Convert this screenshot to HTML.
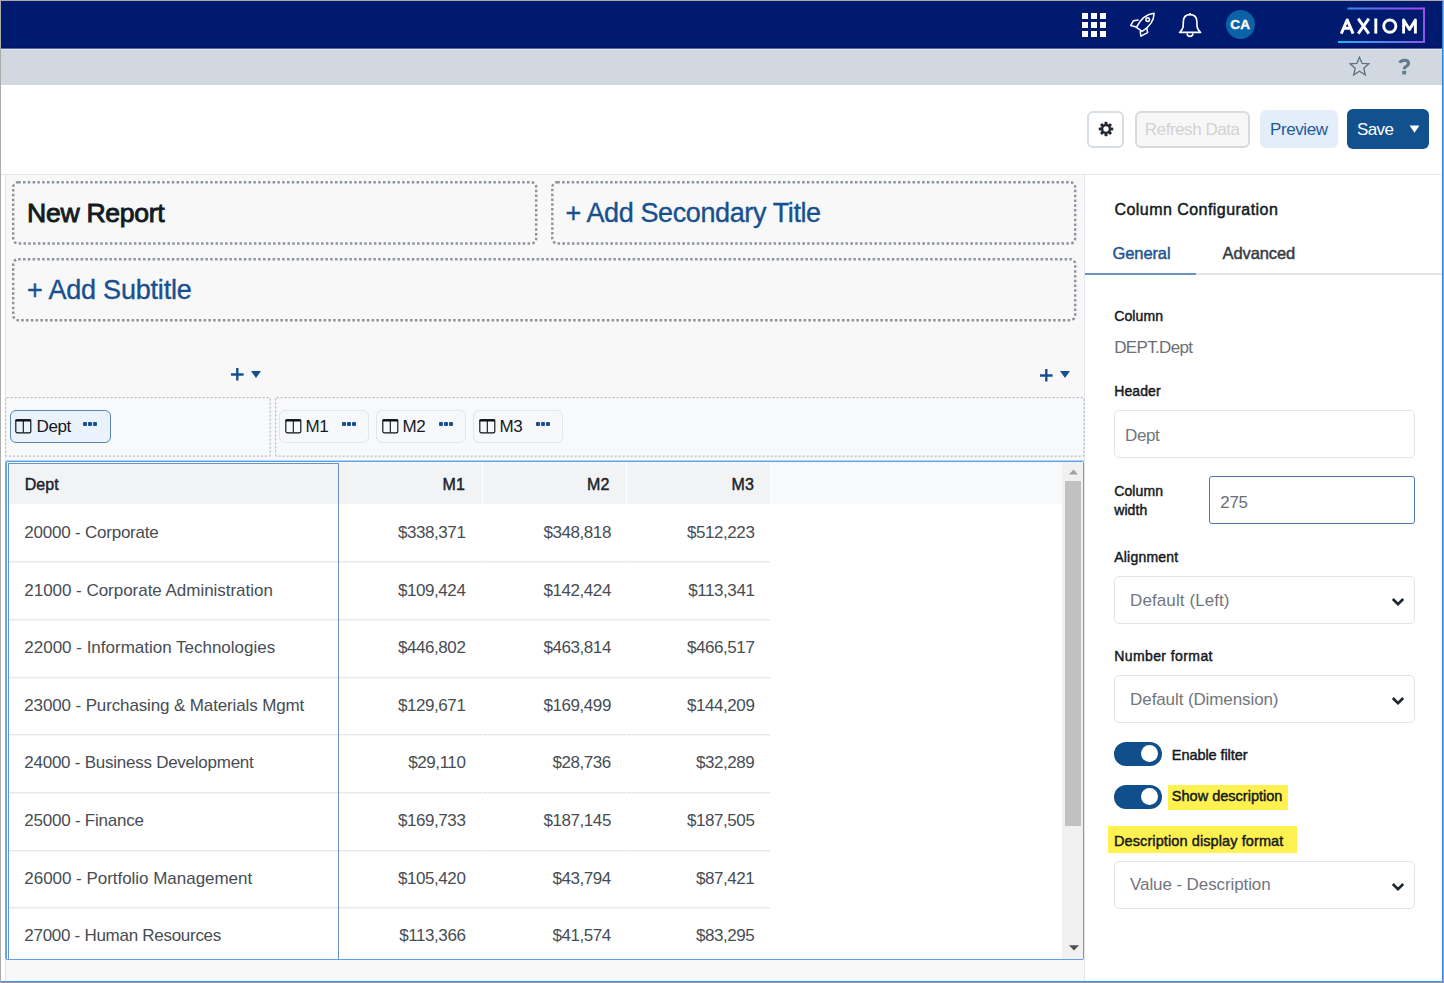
<!DOCTYPE html>
<html><head><meta charset="utf-8"><title>Axiom Report</title>
<style>
html,body{margin:0;padding:0;width:1444px;height:983px;overflow:hidden;background:#fff;}
body{position:relative;font-family:"Liberation Sans",sans-serif;}
.a{position:absolute;}
.t{position:absolute;white-space:nowrap;font-family:"Liberation Sans",sans-serif;}
</style></head><body>
<div class="a" style="left:0px;top:0px;width:1444px;height:983px;background:#fff;"></div>
<div class="a" style="left:1px;top:1px;width:1441px;height:47px;background:#001a70;"></div>
<div class="a" style="left:1px;top:46px;width:1441px;height:2px;background:#00136a;"></div>
<div class="a" style="left:1px;top:48px;width:1441px;height:1px;background:#5a6a9a;"></div>
<div class="a" style="left:1px;top:49px;width:1441px;height:1px;background:#e0e6e9;"></div>
<div class="a" style="left:1px;top:50px;width:1441px;height:35px;background:#d1d8df;"></div>
<div class="a" style="left:1px;top:174px;width:1441px;height:1px;background:#e4e8ec;"></div>
<div class="a" style="left:5px;top:175px;width:1079px;height:806px;background:#f8f8f8;border-left:1px solid #e3e7ec;box-sizing:border-box;"></div>
<div class="a" style="left:1084px;top:175px;width:358px;height:806px;background:#fff;border-left:1px solid #e3e7ec;box-sizing:border-box;"></div>
<div class="a" style="left:0px;top:0px;width:1444px;height:1px;background:#ababab;"></div>
<div class="a" style="left:0px;top:0px;width:1px;height:983px;background:#ababab;"></div>
<div class="a" style="left:1442px;top:1px;width:1px;height:981px;background:#3a80d0;"></div>
<div class="a" style="left:1443px;top:0px;width:1px;height:983px;background:#9aa6b0;"></div>
<div class="a" style="left:1px;top:981px;width:1442px;height:1px;background:#4a90e0;"></div>
<div class="a" style="left:0px;top:982px;width:1444px;height:1px;background:#8a9aa8;"></div>
<div class="a" style="left:1082px;top:13px;width:6px;height:6px;background:#fff;"></div>
<div class="a" style="left:1082px;top:22px;width:6px;height:6px;background:#fff;"></div>
<div class="a" style="left:1082px;top:31px;width:6px;height:6px;background:#fff;"></div>
<div class="a" style="left:1091px;top:13px;width:6px;height:6px;background:#fff;"></div>
<div class="a" style="left:1091px;top:22px;width:6px;height:6px;background:#fff;"></div>
<div class="a" style="left:1091px;top:31px;width:6px;height:6px;background:#fff;"></div>
<div class="a" style="left:1100px;top:13px;width:6px;height:6px;background:#fff;"></div>
<div class="a" style="left:1100px;top:22px;width:6px;height:6px;background:#fff;"></div>
<div class="a" style="left:1100px;top:31px;width:6px;height:6px;background:#fff;"></div>
<svg class="a" style="left:1128px;top:10px" width="30" height="30" viewBox="0 0 30 30">
<g fill="none" stroke="#fff" stroke-width="1.5" stroke-linejoin="round">
<path d="M26.1 3.3 C20 3.8 13 8.5 8.4 17.3 L14.2 21.4 C22 16.5 26 10 26.1 3.3 Z"/>
<path d="M10.6 10 L5.3 10.8 L2.7 15.6 L8.2 16.9"/>
<path d="M18.7 17.6 L19.6 22.6 L12.9 26.2 L12.2 21.2"/>
<circle cx="19.7" cy="9.6" r="1.8"/>
</g></svg>
<svg class="a" style="left:1177px;top:11px" width="26" height="28" viewBox="0 0 26 28">
<g fill="none" stroke="#fff" stroke-width="1.6" stroke-linejoin="round">
<path d="M13 3.6 C8.8 3.6 6.6 6 6.4 10 L6.1 16 C5.7 18.2 3.8 20 2.6 21.4 L23.6 21.4 C22.4 20 20.5 18.2 20.1 16 L19.8 10 C19.6 6 17.4 3.6 13 3.6 Z"/>
<path d="M10 22.3 C10.2 24.4 11.4 25.4 13 25.4 C14.6 25.4 15.8 24.4 16 22.3"/>
<path d="M13 2 L13 3.6"/>
</g></svg>
<div class="a" style="left:1226px;top:10px;width:29px;height:29px;background:#0b62a6;border-radius:50%;"></div>
<div class="t" style="left:1225.30px;top:18.37px;font-size:13.5px;line-height:13.5px;color:#fff;font-weight:400;-webkit-text-stroke:0.4px #fff;letter-spacing:0.2px;width:30px;text-align:center;font-weight:700;">CA</div>
<svg class="a" style="left:1330px;top:0px" width="105" height="48" viewBox="0 0 105 48">
<defs>
<linearGradient id="g1" x1="0" y1="0" x2="1" y2="0"><stop offset="0" stop-color="#3e86e8"/><stop offset="1" stop-color="#a349ee"/></linearGradient>
<linearGradient id="g2" x1="0" y1="0" x2="1" y2="0"><stop offset="0" stop-color="#1ab4f0"/><stop offset="1" stop-color="#8a5ae8"/></linearGradient>
<linearGradient id="g3" x1="0" y1="0" x2="0" y2="1"><stop offset="0" stop-color="#a349ee"/><stop offset="1" stop-color="#8a5ae8"/></linearGradient>
</defs>
<rect x="17.5" y="7.5" width="77" height="2" fill="url(#g1)"/>
<rect x="93" y="7.5" width="2" height="35" fill="url(#g3)"/>
<rect x="8" y="41" width="87" height="2" fill="url(#g2)"/>
</svg>
<svg class="a" style="left:0;top:0" width="1444" height="50"><g fill="none" stroke="#fff" stroke-width="2.9" stroke-linejoin="round"><path d="M1341.3 33.6 L1347.2 19.9 L1353.1 33.6 M1343.6 28.3 L1350.8 28.3"/><path d="M1358.2 18.7 L1368.8 33.6 M1368.8 18.7 L1358.2 33.6"/><path d="M1375.8 18.5 L1375.8 33.6"/><circle cx="1389.8" cy="26.1" r="6.1"/><path d="M1403.6 33.6 L1403.6 19.9 L1409.5 29.5 L1415.4 19.9 L1415.4 33.6"/></g></svg>
<svg class="a" style="left:1349px;top:56px" width="22" height="21" viewBox="0 0 22 21">
<path d="M10.5 1.2 L13.2 7.4 L19.8 7.9 L14.8 12.2 L16.3 18.8 L10.5 15.3 L4.7 18.8 L6.2 12.2 L1.2 7.9 L7.8 7.4 Z" fill="none" stroke="#5b7182" stroke-width="1.3" stroke-linejoin="miter"/>
</svg>
<svg class="a" style="left:1398px;top:58px" width="13" height="17" viewBox="0 0 13 17"><path d="M1.8 4.8 C2.6 2.6 4.4 2.2 6.4 2.2 C8.9 2.2 10.6 3.5 10.6 5.5 C10.6 7.4 8.9 8 7.4 8.9 C6.6 9.5 6.3 10 6.3 11.2" fill="none" stroke="#5d7a8f" stroke-width="3.1"/><rect x="4.3" y="12.9" width="3.8" height="3.5" fill="#5d7a8f"/></svg>
<div class="a" style="left:1087px;top:111px;width:37px;height:37px;border:2px solid #d7dee6;border-radius:6px;box-sizing:border-box;background:#fff;"></div>
<svg class="a" style="left:1098px;top:121px" width="16" height="16" viewBox="0 0 16 16">
<g fill="#23282e"><circle cx="8" cy="8" r="5"/>
<rect x="6.5" y="0.8" width="3" height="3.5" rx="0.8"/><rect x="6.5" y="11.7" width="3" height="3.5" rx="0.8"/>
<rect x="0.8" y="6.5" width="3.5" height="3" rx="0.8"/><rect x="11.7" y="6.5" width="3.5" height="3" rx="0.8"/>
<rect x="6.5" y="0.8" width="3" height="3.5" rx="0.8" transform="rotate(45 8 8)"/><rect x="6.5" y="11.7" width="3" height="3.5" rx="0.8" transform="rotate(45 8 8)"/>
<rect x="0.8" y="6.5" width="3.5" height="3" rx="0.8" transform="rotate(45 8 8)"/><rect x="11.7" y="6.5" width="3.5" height="3" rx="0.8" transform="rotate(45 8 8)"/>
</g><circle cx="8" cy="8" r="2.7" fill="#fff"/></svg>
<div class="a" style="left:1135px;top:111px;width:115px;height:37px;border:2px solid #dadada;border-radius:6px;box-sizing:border-box;background:#f7f7f7;"></div>
<div class="t" style="left:1144.80px;top:121.41px;font-size:17px;line-height:17px;color:#d2d2d2;font-weight:400;letter-spacing:-0.45px;">Refresh Data</div>
<div class="a" style="left:1260px;top:110px;width:78px;height:38px;background:#e3eefa;border-radius:6px;"></div>
<div class="t" style="left:1270.00px;top:121.31px;font-size:17px;line-height:17px;color:#1f5a94;font-weight:400;letter-spacing:-0.4px;">Preview</div>
<div class="a" style="left:1347px;top:109px;width:82px;height:40px;background:#13508e;border-radius:6px;"></div>
<div class="t" style="left:1357.00px;top:121.31px;font-size:17px;line-height:17px;color:#fff;font-weight:400;letter-spacing:-0.6px;">Save</div>
<svg class="a" style="left:1409px;top:125px" width="11" height="8" viewBox="0 0 11 8"><path d="M0.5 0.5 L10.5 0.5 L5.5 7.8 Z" fill="#fff"/></svg>
<svg class="a" style="left:0;top:0" width="1444" height="983"><g fill="none" stroke="#8b939c" stroke-width="2.4" stroke-dasharray="2.5 2.3"><rect x="13.2" y="182.2" width="523" height="61.3" rx="5"/><rect x="552.3" y="182.2" width="522.9" height="61.3" rx="5"/><rect x="13.2" y="259.2" width="1062" height="61" rx="5"/></g></svg>
<div class="t" style="left:27.00px;top:199.78px;font-size:26.6px;line-height:26.6px;color:#121a22;font-weight:400;-webkit-text-stroke:0.9px #121a22;letter-spacing:-0.3px;">New Report</div>
<div class="t" style="left:565.50px;top:199.74px;font-size:27px;line-height:27px;color:#17508e;font-weight:400;-webkit-text-stroke:0.35px #17508e;letter-spacing:-0.39px;">+ Add Secondary Title</div>
<div class="t" style="left:27.00px;top:276.54px;font-size:27px;line-height:27px;color:#17508e;font-weight:400;-webkit-text-stroke:0.35px #17508e;letter-spacing:-0.2px;">+ Add Subtitle</div>
<svg class="a" style="left:230.5px;top:368.3px" width="13" height="13" viewBox="0 0 13 13"><path d="M0 6.5 H12.6 M6.3 0 V12.6" stroke="#17508e" stroke-width="2.4"/></svg>
<svg class="a" style="left:251px;top:371px" width="10" height="7" viewBox="0 0 10 7"><path d="M0 0 L10 0 L5 7 Z" fill="#17508e"/></svg>
<svg class="a" style="left:1039.5px;top:368.5px" width="13" height="13" viewBox="0 0 13 13"><path d="M0 6.5 H12.6 M6.3 0 V12.6" stroke="#17508e" stroke-width="2.4"/></svg>
<svg class="a" style="left:1060px;top:371px" width="10" height="7" viewBox="0 0 10 7"><path d="M0 0 L10 0 L5 7 Z" fill="#17508e"/></svg>
<div class="a" style="left:6px;top:398px;width:264px;height:58px;background:#f8f9fb;"></div>
<div class="a" style="left:276px;top:398px;width:808px;height:58px;background:#f8f9fb;"></div>
<svg class="a" style="left:0;top:0" width="1444" height="983"><g fill="none" stroke="#b9bfc6" stroke-width="1.25" stroke-dasharray="2.1 1.9"><rect x="5.6" y="397.6" width="264.6" height="58.4" rx="1"/><rect x="275.6" y="397.6" width="808.4" height="58.4" rx="1"/></g></svg>
<div class="a" style="left:10px;top:410px;width:101px;height:33px;background:#eaf2fb;border:1.5px solid #5b86b5;border-radius:6px;box-sizing:border-box;"></div>
<svg class="a" style="left:14.8px;top:418.6px" width="17" height="15" viewBox="0 0 17 15"><rect x="0.8" y="0.8" width="15" height="13" rx="1.6" fill="none" stroke="#0d1115" stroke-width="1.15"/><rect x="0.3" y="0.3" width="16" height="2.3" rx="1" fill="#0d1115"/><path d="M8.3 1.5 V13.5" stroke="#0d1115" stroke-width="1.1"/></svg>
<div class="t" style="left:36.50px;top:417.71px;font-size:17px;line-height:17px;color:#15191e;font-weight:400;letter-spacing:-0.4px;">Dept</div>
<div class="a" style="left:83px;top:422px;width:4px;height:4px;background:#17508e;border-radius:1px;"></div>
<div class="a" style="left:88px;top:422px;width:4px;height:4px;background:#17508e;border-radius:1px;"></div>
<div class="a" style="left:93px;top:422px;width:4px;height:4px;background:#17508e;border-radius:1px;"></div>
<div class="a" style="left:279px;top:410px;width:90px;height:33px;background:#f7f8fa;border:1px solid #e2e5e9;border-radius:6px;box-sizing:border-box;"></div>
<svg class="a" style="left:284.6px;top:418.6px" width="17" height="15" viewBox="0 0 17 15"><rect x="0.8" y="0.8" width="15" height="13" rx="1.6" fill="none" stroke="#0d1115" stroke-width="1.15"/><rect x="0.3" y="0.3" width="16" height="2.3" rx="1" fill="#0d1115"/><path d="M8.3 1.5 V13.5" stroke="#0d1115" stroke-width="1.1"/></svg>
<div class="t" style="left:305.50px;top:417.71px;font-size:17px;line-height:17px;color:#15191e;font-weight:400;letter-spacing:-0.4px;">M1</div>
<div class="a" style="left:342px;top:422px;width:4px;height:4px;background:#17508e;border-radius:1px;"></div>
<div class="a" style="left:347px;top:422px;width:4px;height:4px;background:#17508e;border-radius:1px;"></div>
<div class="a" style="left:352px;top:422px;width:4px;height:4px;background:#17508e;border-radius:1px;"></div>
<div class="a" style="left:376px;top:410px;width:90px;height:33px;background:#f7f8fa;border:1px solid #e2e5e9;border-radius:6px;box-sizing:border-box;"></div>
<svg class="a" style="left:381.6px;top:418.6px" width="17" height="15" viewBox="0 0 17 15"><rect x="0.8" y="0.8" width="15" height="13" rx="1.6" fill="none" stroke="#0d1115" stroke-width="1.15"/><rect x="0.3" y="0.3" width="16" height="2.3" rx="1" fill="#0d1115"/><path d="M8.3 1.5 V13.5" stroke="#0d1115" stroke-width="1.1"/></svg>
<div class="t" style="left:402.50px;top:417.71px;font-size:17px;line-height:17px;color:#15191e;font-weight:400;letter-spacing:-0.4px;">M2</div>
<div class="a" style="left:439px;top:422px;width:4px;height:4px;background:#17508e;border-radius:1px;"></div>
<div class="a" style="left:444px;top:422px;width:4px;height:4px;background:#17508e;border-radius:1px;"></div>
<div class="a" style="left:449px;top:422px;width:4px;height:4px;background:#17508e;border-radius:1px;"></div>
<div class="a" style="left:473px;top:410px;width:90px;height:33px;background:#f7f8fa;border:1px solid #e2e5e9;border-radius:6px;box-sizing:border-box;"></div>
<svg class="a" style="left:478.6px;top:418.6px" width="17" height="15" viewBox="0 0 17 15"><rect x="0.8" y="0.8" width="15" height="13" rx="1.6" fill="none" stroke="#0d1115" stroke-width="1.15"/><rect x="0.3" y="0.3" width="16" height="2.3" rx="1" fill="#0d1115"/><path d="M8.3 1.5 V13.5" stroke="#0d1115" stroke-width="1.1"/></svg>
<div class="t" style="left:499.50px;top:417.71px;font-size:17px;line-height:17px;color:#15191e;font-weight:400;letter-spacing:-0.4px;">M3</div>
<div class="a" style="left:536px;top:422px;width:4px;height:4px;background:#17508e;border-radius:1px;"></div>
<div class="a" style="left:541px;top:422px;width:4px;height:4px;background:#17508e;border-radius:1px;"></div>
<div class="a" style="left:546px;top:422px;width:4px;height:4px;background:#17508e;border-radius:1px;"></div>
<div class="a" style="left:6px;top:460px;width:1078px;height:1px;background:#b5d3f3;"></div>
<div class="a" style="left:5px;top:461px;width:1079px;height:499px;background:#fff;border:1px solid #5aa0ec;border-left:2px solid #62a6ee;border-radius:2px;box-sizing:border-box;"></div>
<div class="a" style="left:7px;top:462px;width:1055px;height:42px;background:#f8f9fb;"></div>
<div class="a" style="left:8px;top:463px;width:762px;height:41px;background:#f2f3f5;"></div>
<div class="a" style="left:482px;top:463px;width:1px;height:41px;background:#fff;"></div>
<div class="a" style="left:626px;top:463px;width:1px;height:41px;background:#fff;"></div>
<div class="a" style="left:770px;top:463px;width:1px;height:41px;background:#fff;"></div>
<div class="t" style="left:24.30px;top:524.01px;font-size:17px;line-height:17px;color:#474d54;font-weight:400;letter-spacing:-0.22px;">20000 - Corporate</div>
<div class="t" style="left:325.40px;width:140px;text-align:right;top:524.01px;font-size:17px;line-height:17px;color:#474d54;font-weight:400;letter-spacing:-0.45px;">$338,371</div>
<div class="t" style="left:470.90px;width:140px;text-align:right;top:524.01px;font-size:17px;line-height:17px;color:#474d54;font-weight:400;letter-spacing:-0.45px;">$348,818</div>
<div class="t" style="left:614.40px;width:140px;text-align:right;top:524.01px;font-size:17px;line-height:17px;color:#474d54;font-weight:400;letter-spacing:-0.45px;">$512,223</div>
<div class="a" style="left:8px;top:561px;width:762px;height:1px;background:#e4e8eb;"></div>
<div class="a" style="left:8px;top:562px;width:762px;height:1px;background:#f3f5f6;"></div>
<div class="a" style="left:482px;top:561px;width:1px;height:2px;background:#fff;"></div>
<div class="a" style="left:626px;top:561px;width:1px;height:2px;background:#fff;"></div>
<div class="t" style="left:24.30px;top:581.61px;font-size:17px;line-height:17px;color:#474d54;font-weight:400;letter-spacing:-0.03px;">21000 - Corporate Administration</div>
<div class="t" style="left:325.40px;width:140px;text-align:right;top:581.61px;font-size:17px;line-height:17px;color:#474d54;font-weight:400;letter-spacing:-0.45px;">$109,424</div>
<div class="t" style="left:470.90px;width:140px;text-align:right;top:581.61px;font-size:17px;line-height:17px;color:#474d54;font-weight:400;letter-spacing:-0.45px;">$142,424</div>
<div class="t" style="left:614.40px;width:140px;text-align:right;top:581.61px;font-size:17px;line-height:17px;color:#474d54;font-weight:400;letter-spacing:-0.45px;">$113,341</div>
<div class="a" style="left:8px;top:619px;width:762px;height:1px;background:#e4e8eb;"></div>
<div class="a" style="left:8px;top:620px;width:762px;height:1px;background:#f3f5f6;"></div>
<div class="a" style="left:482px;top:619px;width:1px;height:2px;background:#fff;"></div>
<div class="a" style="left:626px;top:619px;width:1px;height:2px;background:#fff;"></div>
<div class="t" style="left:24.30px;top:639.21px;font-size:17px;line-height:17px;color:#474d54;font-weight:400;letter-spacing:-0.005px;">22000 - Information Technologies</div>
<div class="t" style="left:325.40px;width:140px;text-align:right;top:639.21px;font-size:17px;line-height:17px;color:#474d54;font-weight:400;letter-spacing:-0.45px;">$446,802</div>
<div class="t" style="left:470.90px;width:140px;text-align:right;top:639.21px;font-size:17px;line-height:17px;color:#474d54;font-weight:400;letter-spacing:-0.45px;">$463,814</div>
<div class="t" style="left:614.40px;width:140px;text-align:right;top:639.21px;font-size:17px;line-height:17px;color:#474d54;font-weight:400;letter-spacing:-0.45px;">$466,517</div>
<div class="a" style="left:8px;top:677px;width:762px;height:1px;background:#e4e8eb;"></div>
<div class="a" style="left:8px;top:678px;width:762px;height:1px;background:#f3f5f6;"></div>
<div class="a" style="left:482px;top:677px;width:1px;height:2px;background:#fff;"></div>
<div class="a" style="left:626px;top:677px;width:1px;height:2px;background:#fff;"></div>
<div class="t" style="left:24.30px;top:696.81px;font-size:17px;line-height:17px;color:#474d54;font-weight:400;letter-spacing:-0.13px;">23000 - Purchasing &amp; Materials Mgmt</div>
<div class="t" style="left:325.40px;width:140px;text-align:right;top:696.81px;font-size:17px;line-height:17px;color:#474d54;font-weight:400;letter-spacing:-0.45px;">$129,671</div>
<div class="t" style="left:470.90px;width:140px;text-align:right;top:696.81px;font-size:17px;line-height:17px;color:#474d54;font-weight:400;letter-spacing:-0.45px;">$169,499</div>
<div class="t" style="left:614.40px;width:140px;text-align:right;top:696.81px;font-size:17px;line-height:17px;color:#474d54;font-weight:400;letter-spacing:-0.45px;">$144,209</div>
<div class="a" style="left:8px;top:734px;width:762px;height:1px;background:#e4e8eb;"></div>
<div class="a" style="left:8px;top:735px;width:762px;height:1px;background:#f3f5f6;"></div>
<div class="a" style="left:482px;top:734px;width:1px;height:2px;background:#fff;"></div>
<div class="a" style="left:626px;top:734px;width:1px;height:2px;background:#fff;"></div>
<div class="t" style="left:24.30px;top:754.41px;font-size:17px;line-height:17px;color:#474d54;font-weight:400;letter-spacing:-0.25px;">24000 - Business Development</div>
<div class="t" style="left:325.40px;width:140px;text-align:right;top:754.41px;font-size:17px;line-height:17px;color:#474d54;font-weight:400;letter-spacing:-0.45px;">$29,110</div>
<div class="t" style="left:470.90px;width:140px;text-align:right;top:754.41px;font-size:17px;line-height:17px;color:#474d54;font-weight:400;letter-spacing:-0.45px;">$28,736</div>
<div class="t" style="left:614.40px;width:140px;text-align:right;top:754.41px;font-size:17px;line-height:17px;color:#474d54;font-weight:400;letter-spacing:-0.45px;">$32,289</div>
<div class="a" style="left:8px;top:792px;width:762px;height:1px;background:#e4e8eb;"></div>
<div class="a" style="left:8px;top:793px;width:762px;height:1px;background:#f3f5f6;"></div>
<div class="a" style="left:482px;top:792px;width:1px;height:2px;background:#fff;"></div>
<div class="a" style="left:626px;top:792px;width:1px;height:2px;background:#fff;"></div>
<div class="t" style="left:24.30px;top:812.01px;font-size:17px;line-height:17px;color:#474d54;font-weight:400;letter-spacing:-0.23px;">25000 - Finance</div>
<div class="t" style="left:325.40px;width:140px;text-align:right;top:812.01px;font-size:17px;line-height:17px;color:#474d54;font-weight:400;letter-spacing:-0.45px;">$169,733</div>
<div class="t" style="left:470.90px;width:140px;text-align:right;top:812.01px;font-size:17px;line-height:17px;color:#474d54;font-weight:400;letter-spacing:-0.45px;">$187,145</div>
<div class="t" style="left:614.40px;width:140px;text-align:right;top:812.01px;font-size:17px;line-height:17px;color:#474d54;font-weight:400;letter-spacing:-0.45px;">$187,505</div>
<div class="a" style="left:8px;top:850px;width:762px;height:1px;background:#e4e8eb;"></div>
<div class="a" style="left:8px;top:851px;width:762px;height:1px;background:#f3f5f6;"></div>
<div class="a" style="left:482px;top:850px;width:1px;height:2px;background:#fff;"></div>
<div class="a" style="left:626px;top:850px;width:1px;height:2px;background:#fff;"></div>
<div class="t" style="left:24.30px;top:869.61px;font-size:17px;line-height:17px;color:#474d54;font-weight:400;letter-spacing:-0.03px;">26000 - Portfolio Management</div>
<div class="t" style="left:325.40px;width:140px;text-align:right;top:869.61px;font-size:17px;line-height:17px;color:#474d54;font-weight:400;letter-spacing:-0.45px;">$105,420</div>
<div class="t" style="left:470.90px;width:140px;text-align:right;top:869.61px;font-size:17px;line-height:17px;color:#474d54;font-weight:400;letter-spacing:-0.45px;">$43,794</div>
<div class="t" style="left:614.40px;width:140px;text-align:right;top:869.61px;font-size:17px;line-height:17px;color:#474d54;font-weight:400;letter-spacing:-0.45px;">$87,421</div>
<div class="a" style="left:8px;top:907px;width:762px;height:1px;background:#e4e8eb;"></div>
<div class="a" style="left:8px;top:908px;width:762px;height:1px;background:#f3f5f6;"></div>
<div class="a" style="left:482px;top:907px;width:1px;height:2px;background:#fff;"></div>
<div class="a" style="left:626px;top:907px;width:1px;height:2px;background:#fff;"></div>
<div class="t" style="left:24.30px;top:927.21px;font-size:17px;line-height:17px;color:#474d54;font-weight:400;letter-spacing:-0.28px;">27000 - Human Resources</div>
<div class="t" style="left:325.40px;width:140px;text-align:right;top:927.21px;font-size:17px;line-height:17px;color:#474d54;font-weight:400;letter-spacing:-0.45px;">$113,366</div>
<div class="t" style="left:470.90px;width:140px;text-align:right;top:927.21px;font-size:17px;line-height:17px;color:#474d54;font-weight:400;letter-spacing:-0.45px;">$41,574</div>
<div class="t" style="left:614.40px;width:140px;text-align:right;top:927.21px;font-size:17px;line-height:17px;color:#474d54;font-weight:400;letter-spacing:-0.45px;">$83,295</div>
<div class="t" style="left:24.70px;top:477.26px;font-size:16px;line-height:16px;color:#1b232c;font-weight:400;-webkit-text-stroke:0.45px #1b232c;letter-spacing:0.1px;">Dept</div>
<div class="t" style="left:365.00px;width:100px;text-align:right;top:477.26px;font-size:16px;line-height:16px;color:#1b232c;font-weight:400;-webkit-text-stroke:0.45px #1b232c;letter-spacing:0.1px;">M1</div>
<div class="t" style="left:509.50px;width:100px;text-align:right;top:477.26px;font-size:16px;line-height:16px;color:#1b232c;font-weight:400;-webkit-text-stroke:0.45px #1b232c;letter-spacing:0.1px;">M2</div>
<div class="t" style="left:654.00px;width:100px;text-align:right;top:477.26px;font-size:16px;line-height:16px;color:#1b232c;font-weight:400;-webkit-text-stroke:0.45px #1b232c;letter-spacing:0.1px;">M3</div>
<div class="a" style="left:8px;top:463px;width:331px;height:497px;border:1px solid #6a94c4;border-bottom:none;box-sizing:border-box;"></div>
<div class="a" style="left:1062px;top:462px;width:21px;height:497px;background:#f1f1f1;"></div>
<div class="a" style="left:1065px;top:481px;width:16px;height:345px;background:#c1c1c1;"></div>
<svg class="a" style="left:1069px;top:469px" width="9" height="6" viewBox="0 0 9 6"><path d="M0 5.5 L9 5.5 L4.5 0.5 Z" fill="#a3a3a3"/></svg>
<svg class="a" style="left:1069px;top:945px" width="10" height="6" viewBox="0 0 10 6"><path d="M0 0.2 L10 0.2 L5 5.5 Z" fill="#505050"/></svg>
<div class="t" style="left:1114.40px;top:202.36px;font-size:16px;line-height:16px;color:#121820;font-weight:400;-webkit-text-stroke:0.45px #121820;letter-spacing:0.46px;">Column Configuration</div>
<div class="t" style="left:1112.50px;top:245.43px;font-size:16.5px;line-height:16.5px;color:#1f5590;font-weight:400;-webkit-text-stroke:0.45px #1f5590;letter-spacing:-0.1px;">General</div>
<div class="t" style="left:1222.50px;top:245.43px;font-size:16.5px;line-height:16.5px;color:#333a42;font-weight:400;-webkit-text-stroke:0.45px #333a42;letter-spacing:-0.1px;">Advanced</div>
<div class="a" style="left:1085px;top:273px;width:357px;height:2px;background:#e3e5e8;"></div>
<div class="a" style="left:1085px;top:273px;width:111px;height:2px;background:#6a94bd;"></div>
<div class="t" style="left:1114.20px;top:308.55px;font-size:14px;line-height:14px;color:#15191e;font-weight:400;-webkit-text-stroke:0.45px #15191e;letter-spacing:0.1px;">Column</div>
<div class="t" style="left:1114.20px;top:338.51px;font-size:17px;line-height:17px;color:#6b7075;font-weight:400;letter-spacing:-0.65px;">DEPT.Dept</div>
<div class="t" style="left:1114.20px;top:384.45px;font-size:14px;line-height:14px;color:#15191e;font-weight:400;-webkit-text-stroke:0.45px #15191e;letter-spacing:0.1px;">Header</div>
<div class="a" style="left:1114px;top:410px;width:301px;height:48px;border:1px solid #e2e5e8;border-radius:5px;box-sizing:border-box;background:#fff;"></div>
<div class="t" style="left:1125.10px;top:426.81px;font-size:17px;line-height:17px;color:#71767b;font-weight:400;letter-spacing:-0.4px;">Dept</div>
<div class="t" style="left:1114.20px;top:483.75px;font-size:14px;line-height:14px;color:#15191e;font-weight:400;-webkit-text-stroke:0.45px #15191e;letter-spacing:0.1px;">Column</div>
<div class="t" style="left:1114.20px;top:502.85px;font-size:14px;line-height:14px;color:#15191e;font-weight:400;-webkit-text-stroke:0.45px #15191e;letter-spacing:0.1px;">width</div>
<div class="a" style="left:1209px;top:476px;width:206px;height:48px;border:1.5px solid #4f79a8;border-radius:3px;box-sizing:border-box;background:#fff;"></div>
<div class="t" style="left:1220.30px;top:493.91px;font-size:17px;line-height:17px;color:#6b7075;font-weight:400;letter-spacing:-0.3px;">275</div>
<div class="t" style="left:1114.20px;top:550.35px;font-size:14px;line-height:14px;color:#15191e;font-weight:400;-webkit-text-stroke:0.45px #15191e;letter-spacing:0.22px;">Alignment</div>
<div class="a" style="left:1114px;top:576px;width:301px;height:48px;border:1px solid #e2e5e8;border-radius:5px;box-sizing:border-box;background:#fff;"></div>
<div class="t" style="left:1130.10px;top:592.01px;font-size:17px;line-height:17px;color:#71767b;font-weight:400;letter-spacing:0.09px;">Default (Left)</div>
<svg class="a" style="left:1391px;top:597.0px" width="14" height="10" viewBox="0 0 14 10"><path d="M1.8 2 L7 7.2 L12.2 2" fill="none" stroke="#1c2530" stroke-width="2.6"/></svg>
<div class="t" style="left:1114.20px;top:649.45px;font-size:14px;line-height:14px;color:#15191e;font-weight:400;-webkit-text-stroke:0.45px #15191e;letter-spacing:0.41px;">Number format</div>
<div class="a" style="left:1114px;top:675px;width:301px;height:48px;border:1px solid #e2e5e8;border-radius:5px;box-sizing:border-box;background:#fff;"></div>
<div class="t" style="left:1130.10px;top:690.91px;font-size:17px;line-height:17px;color:#71767b;font-weight:400;letter-spacing:-0.1px;">Default (Dimension)</div>
<svg class="a" style="left:1391px;top:696.0px" width="14" height="10" viewBox="0 0 14 10"><path d="M1.8 2 L7 7.2 L12.2 2" fill="none" stroke="#1c2530" stroke-width="2.6"/></svg>
<div class="a" style="left:1114px;top:742px;width:48px;height:24px;background:#114e8c;border-radius:12px;"></div>
<div class="a" style="left:1140.9px;top:745px;width:17.59999999999991px;height:17.399999999999977px;background:#fff;border-radius:50%;"></div>
<div class="t" style="left:1171.80px;top:747.63px;font-size:14.5px;line-height:14.5px;color:#15191e;font-weight:400;-webkit-text-stroke:0.45px #15191e;letter-spacing:-0.07px;">Enable filter</div>
<div class="a" style="left:1114px;top:785px;width:48px;height:24px;background:#114e8c;border-radius:12px;"></div>
<div class="a" style="left:1140.9px;top:788px;width:17.59999999999991px;height:17.399999999999977px;background:#fff;border-radius:50%;"></div>
<div class="a" style="left:1168px;top:785px;width:120px;height:25px;background:#fff250;"></div>
<div class="t" style="left:1171.80px;top:789.33px;font-size:14.5px;line-height:14.5px;color:#15191e;font-weight:400;-webkit-text-stroke:0.45px #15191e;letter-spacing:0.01px;">Show description</div>
<div class="a" style="left:1108px;top:826px;width:189px;height:27px;background:#fff250;"></div>
<div class="t" style="left:1114.00px;top:834.33px;font-size:14.5px;line-height:14.5px;color:#15191e;font-weight:400;-webkit-text-stroke:0.45px #15191e;letter-spacing:0.1px;">Description display format</div>
<div class="a" style="left:1114px;top:861px;width:301px;height:48px;border:1px solid #e2e5e8;border-radius:5px;box-sizing:border-box;background:#fff;"></div>
<div class="t" style="left:1130.10px;top:876.21px;font-size:17px;line-height:17px;color:#71767b;font-weight:400;letter-spacing:-0.1px;">Value - Description</div>
<svg class="a" style="left:1391px;top:882.0px" width="14" height="10" viewBox="0 0 14 10"><path d="M1.8 2 L7 7.2 L12.2 2" fill="none" stroke="#1c2530" stroke-width="2.6"/></svg>
</body></html>
